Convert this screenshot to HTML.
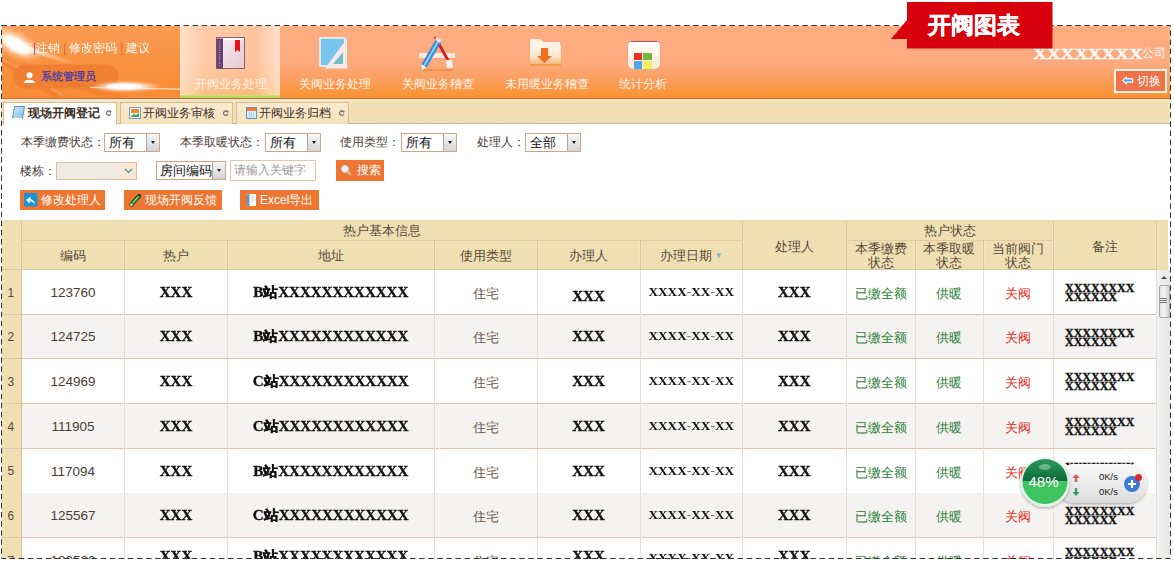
<!DOCTYPE html><html><head><meta charset="utf-8"><style>
*{box-sizing:border-box;margin:0;padding:0}
html,body{width:1174px;height:562px;overflow:hidden;background:#fff;font-family:"Liberation Sans",sans-serif;position:relative}
.a{position:absolute}
.hdr{left:2px;top:26px;width:1168px;height:72px;background:linear-gradient(#fcb48e 0,#fdac82 2px,#fdab7f 50%,#fca672 60%,#fb9e5e 75%,#fa9844 88%,#f99230 100%)}
.hdrline{left:2px;top:98px;width:1168px;height:1px;background:rgba(170,80,10,.8)}
.navact{left:180px;top:26px;width:100px;height:72px;background:linear-gradient(90deg,rgba(255,238,222,.8),rgba(255,222,190,.6) 25%,rgba(255,215,180,.55) 75%,rgba(255,238,222,.8))}
.green{left:180px;top:95px;width:100px;height:3px;background:linear-gradient(#cce86c,#acd44c)}
.navlbl{top:77px;height:14px;font-size:11.5px;line-height:14px;color:#fff3e6;white-space:nowrap}
.tabbar{left:2px;top:99px;width:1168px;height:25px;background:linear-gradient(#fde4c4 0,#fde4c4 2px,#eee2b8 3px,#f3dfb2 50%,#ede2ba 90%,#f3e0b8 100%);border-bottom:1px solid #cdb492}
.tab{top:102px;height:22px;border:1px solid #d9bb90;border-bottom:none;background:linear-gradient(#f9ead0,#f5e2bc);font-size:12.2px;line-height:20px;color:#3a3028;white-space:nowrap}
.tab.act{background:#fff;height:23px}
.lbl{font-size:12px;line-height:14px;color:#4a4038;white-space:nowrap}
.sel{height:19px;width:56px;border:1px solid #c9a888;background:#fff;font-size:12.5px;line-height:19px;padding-left:4px;color:#111}
.sel .arr{position:absolute;right:0;top:0;width:13.5px;height:17px;background:linear-gradient(#f6f6f6,#d4d4d4);border-left:1px solid #a8a8a8}
.sel .arr:after{content:"";position:absolute;left:4px;top:7px;border-left:2.5px solid transparent;border-right:2.5px solid transparent;border-top:3px solid #222}
.btn{height:20px;background:#ee7632;color:#fff;font-size:12px;line-height:20px;white-space:nowrap}
.th{color:#5a4a38;font-size:12.5px;text-align:center;white-space:nowrap}
.cell{text-align:center;white-space:nowrap}
.num{font-size:13.5px;color:#4a3c34;padding-top:1px}
.xs{font-family:"Liberation Serif",serif;font-weight:bold;font-size:15px;color:#111;-webkit-text-stroke:.35px #111}
.xs span{display:inline-block;transform:scaleY(.95)}
.dt{font-size:13.3px;-webkit-text-stroke:0}
.dt i{font-style:normal;color:#777;-webkit-text-stroke:0}
.cn{font-size:13px;color:#6a5448;padding-top:4px}
.g{color:#2c7e34;font-size:13px;padding-top:4px}
.r{color:#e62a14;font-size:13px;padding-top:4px}
.vl{width:1px;background:repeating-linear-gradient(#e4d4c4 0 1px,#efe8e2 1px 2px)}
.hl{height:1px;background:repeating-linear-gradient(90deg,#d4b898 0 1px,#e8d6c0 1px 2px)}
</style></head><body>
<div class="a hdr"></div>
<svg class="a" style="left:2px;top:26px" width="178" height="72" viewBox="0 0 178 72">
<defs>
<linearGradient id="lb" x1="0" y1="0" x2="0" y2="1"><stop offset="0" stop-color="#fa9c56"/><stop offset=".5" stop-color="#f99240"/><stop offset="1" stop-color="#f88c36"/></linearGradient>
<radialGradient id="glow1" cx="0.5" cy="0.5" r="0.5"><stop offset="0" stop-color="#fff" stop-opacity="1"/><stop offset=".45" stop-color="#fff" stop-opacity=".8"/><stop offset="1" stop-color="#fff" stop-opacity="0"/></radialGradient>
<linearGradient id="st1" x1="0" y1="0" x2="1" y2="0"><stop offset="0" stop-color="#fff" stop-opacity="1"/><stop offset=".5" stop-color="#fff" stop-opacity=".6"/><stop offset="1" stop-color="#fff" stop-opacity="0"/></linearGradient>
<filter id="bl" x="-50%" y="-50%" width="200%" height="200%"><feGaussianBlur stdDeviation="1.2"/></filter>
<filter id="bl2" x="-50%" y="-50%" width="200%" height="200%"><feGaussianBlur stdDeviation="2.5"/></filter>
</defs>
<rect width="178" height="72" fill="url(#lb)"/>
<path d="M0 30 C20 40 45 58 70 72 L52 72 C35 60 15 46 0 38Z" fill="#ec7424" opacity=".45" filter="url(#bl)"/>
<path d="M20 36 C50 48 90 62 130 72 L105 72 C75 64 45 52 18 42Z" fill="#ec7424" opacity=".35" filter="url(#bl)"/>
<path d="M0 33 C20 43 40 56 62 70" stroke="#fff" stroke-width="1.2" fill="none" opacity=".45" filter="url(#bl)"/>
<ellipse cx="14" cy="18" rx="28" ry="12" transform="rotate(30 14 18)" fill="url(#glow1)" filter="url(#bl2)"/>
<ellipse cx="14" cy="19" rx="15" ry="6" transform="rotate(30 14 19)" fill="#fff" opacity=".95" filter="url(#bl)"/>
<path d="M12 15 C30 22 52 30 75 37 L73 39 C52 33 30 26 10 20Z" fill="url(#st1)" filter="url(#bl)"/>
<rect x="11.5" y="38.5" width="105" height="24" rx="12" fill="#ee7a30" opacity=".8"/>
<ellipse cx="124" cy="60.5" rx="36" ry="5.5" fill="url(#glow1)" filter="url(#bl)"/>
<ellipse cx="122" cy="60.5" rx="18" ry="2.8" fill="#fff" filter="url(#bl)"/>
<path d="M88 61 L178 62.5 L178 63.7 L88 62Z" fill="#fff" opacity=".7"/>
</svg>
<div class="a" style="left:9px;top:41px;font-size:12px;line-height:14px;color:#fff;white-space:nowrap;opacity:.95;letter-spacing:0"><span style="opacity:.5">欢迎</span><span style="color:#8a50a0">|</span>注销<span style="color:#c86a3a;margin:0 3px">|</span>修改密码<span style="color:#c86a3a;margin:0 3px">|</span>建议</div>
<svg class="a" style="left:24px;top:72px" width="11" height="11" viewBox="0 0 11 11"><circle cx="5.5" cy="3.2" r="3" fill="#fff"/><path d="M0 11 C0 6.5 11 6.5 11 11Z" fill="#fff"/></svg>
<div class="a" style="left:41px;top:70px;font-size:11px;line-height:13px;color:#4a3aa8;white-space:nowrap;-webkit-text-stroke:.3px #4a3aa8">系统管理员</div>
<div class="a navact"></div><div class="a green"></div>
<div class="a hdrline"></div>
<svg class="a" style="left:216px;top:37px" width="29" height="32" viewBox="0 0 29 32">
<defs><linearGradient id="bk" x1="0" y1="0" x2="1" y2="1"><stop offset="0" stop-color="#f8eef2"/><stop offset="1" stop-color="#e6c8d2"/></linearGradient></defs>
<rect x="0.5" y="0.5" width="28" height="31" fill="url(#bk)" stroke="#8a6070" stroke-width="1"/>
<rect x="1" y="1" width="27" height="2.2" fill="#fff"/>
<rect x="0.5" y="1.5" width="6.5" height="30" fill="#6a4072"/>
<path d="M3.5 4 v26" stroke="#b8a0c8" stroke-width="1.2" stroke-dasharray="1 1.2"/>
<path d="M19 3 h5 v12 l-2.5 -2 l-2.5 2z" fill="#e8101c"/>
</svg>
<svg class="a" style="left:319px;top:37px" width="30" height="33" viewBox="0 0 30 33">
<rect x="1" y="1" width="25" height="28" fill="#78c6ee" stroke="#eaf8ff" stroke-width="1.5"/>
<path d="M28 1.5 L28 31.5 L6 31.5Z" fill="#f8eaea"/>
<path d="M24 15 L24 27 L14 27Z" fill="#70c0c8"/>
</svg>
<svg class="a" style="left:417px;top:34px" width="40" height="38" viewBox="0 0 40 38">
<rect x="2" y="19" width="36" height="5" fill="#fbeeee" opacity=".9"/>
<path d="M18 3 L32 28" stroke="#d81818" stroke-width="2.6"/>
<path d="M22 6 L7 32" stroke="#3a86d8" stroke-width="6"/>
<path d="M22 6 L7 32" stroke="#8ad0f8" stroke-width="2"/>
<path d="M19 3 L25 6 L23 9 L18 6Z" fill="#f8d8e0"/>
<path d="M4.5 30.5 L9.5 33.5 L5 36Z" fill="#fff"/>
<path d="M29 26 L35 26 L36 34 L30 34Z" fill="#fff" opacity=".9"/>
<path d="M6 36 L36 36" stroke="#f07020" stroke-width="1.5" opacity=".6"/>
</svg>
<svg class="a" style="left:529px;top:37px" width="33" height="30" viewBox="0 0 33 30">
<defs><linearGradient id="fd" x1="0" y1="0" x2="0" y2="1"><stop offset="0" stop-color="#fff6ec"/><stop offset=".6" stop-color="#fde4c8"/><stop offset="1" stop-color="#f8b070"/></linearGradient></defs>
<path d="M1 2 h10 l3 3 h17 v4 h-30z" fill="#fff2e4"/>
<rect x="1" y="8" width="31" height="20" fill="url(#fd)"/>
<path d="M1 28 h31" stroke="#f09040" stroke-width="1.5"/>
<path d="M12 11 h7 v8 h4 l-7.5 7 l-7.5 -7 h4z" fill="#f07020"/>
</svg>
<svg class="a" style="left:626px;top:39px" width="36" height="32" viewBox="0 0 36 32">
<defs><linearGradient id="wd" x1="0" y1="0" x2="0" y2="1"><stop offset="0" stop-color="#fff"/><stop offset="1" stop-color="#fde8d0"/></linearGradient></defs>
<rect x="1.5" y="1.5" width="33" height="29" rx="6" fill="url(#wd)" stroke="#e0a890"/>
<path d="M5 2.5 h26" stroke="#b06050" stroke-width="1"/>
<rect x="8" y="14" width="8" height="7" fill="#e83020"/>
<rect x="17" y="14" width="9" height="7" fill="#70b840"/>
<rect x="8" y="22" width="8" height="8" fill="#50a8e8"/>
<rect x="17" y="22" width="9" height="8" fill="#f0f060"/>
</svg>
<div class="a navlbl" style="left:195px">开阀业务处理</div>
<div class="a navlbl" style="left:299px">关阀业务处理</div>
<div class="a navlbl" style="left:402px">关阀业务稽查</div>
<div class="a navlbl" style="left:505px">未用暖业务稽查</div>
<div class="a navlbl" style="left:619px">统计分析</div>
<div class="a" style="left:1033px;top:44.5px;height:14px;white-space:nowrap"><span style="display:inline-block;font-family:'Liberation Serif',serif;font-weight:bold;font-size:14.5px;line-height:14px;color:rgba(255,255,255,.88);-webkit-text-stroke:.5px rgba(255,255,255,.88);transform:scaleX(1.31);transform-origin:0 0">XXXXXXXX</span></div>
<div class="a" style="left:1142px;top:46px;font-size:12px;line-height:14px;color:#fff;white-space:nowrap">公司</div>
<div class="a" style="left:1114px;top:69px;width:53px;height:24px;border:2px solid #fff3ea;background:#f07248;color:#fff;font-size:12px;line-height:20px;padding-left:21px">切换</div>
<svg class="a" style="left:1121px;top:75px" width="13" height="11" viewBox="0 0 13 11"><path d="M0.8 5.5 L6 0.8 V3.2 H12.2 V7.8 H6 V10.2Z" fill="#fff"/><path d="M2.5 5.5 L5.2 3 V4.4 H11 V6.6 H5.2 V8Z" fill="#48a8e8"/></svg>
<div class="a" style="left:2px;top:220px;width:1166px;height:49.5px;background:#efe0b4"></div>
<div class="a" style="left:2px;top:269px;width:19.5px;height:290px;background:#f0dfb2"></div>
<div class="a" style="left:21.5px;top:269.50px;width:1134.5px;height:44.67px;background:#fff"></div>
<div class="a" style="left:21.5px;top:314.17px;width:1134.5px;height:44.67px;background:#f4f3f1"></div>
<div class="a" style="left:21.5px;top:358.84px;width:1134.5px;height:44.67px;background:#fff"></div>
<div class="a" style="left:21.5px;top:403.51px;width:1134.5px;height:44.67px;background:#f4f3f1"></div>
<div class="a" style="left:21.5px;top:448.18px;width:1134.5px;height:44.67px;background:#fff"></div>
<div class="a" style="left:21.5px;top:492.85px;width:1134.5px;height:44.67px;background:#f4f3f1"></div>
<div class="a" style="left:21.5px;top:537.52px;width:1134.5px;height:44.67px;background:#fff"></div>
<div class="a" style="left:2px;top:268.5px;width:1154px;height:1px;background:#d8c8a4"></div>
<div class="a hl" style="left:2px;top:313.67px;width:1154px"></div>
<div class="a hl" style="left:2px;top:358.34px;width:1154px"></div>
<div class="a hl" style="left:2px;top:403.01px;width:1154px"></div>
<div class="a hl" style="left:2px;top:447.68px;width:1154px"></div>
<div class="a hl" style="left:2px;top:537.02px;width:1154px"></div>
<div class="a hl" style="left:2px;top:581.69px;width:1154px"></div>
<div class="a vl" style="left:21.0px;top:270px;height:290px"></div>
<div class="a vl" style="left:124.0px;top:270px;height:290px"></div>
<div class="a vl" style="left:227.0px;top:270px;height:290px"></div>
<div class="a vl" style="left:433.5px;top:270px;height:290px"></div>
<div class="a vl" style="left:536.5px;top:270px;height:290px"></div>
<div class="a vl" style="left:639.5px;top:270px;height:290px"></div>
<div class="a vl" style="left:742.0px;top:270px;height:290px"></div>
<div class="a vl" style="left:845.5px;top:270px;height:290px"></div>
<div class="a vl" style="left:914.5px;top:270px;height:290px"></div>
<div class="a vl" style="left:982.5px;top:270px;height:290px"></div>
<div class="a vl" style="left:1052.5px;top:270px;height:290px"></div>
<div class="a vl" style="left:1155.5px;top:270px;height:290px"></div>
<div class="a" style="left:741.0px;top:220px;width:3px;height:48.5px;background:#f6e2c0"></div><div class="a" style="left:742.0px;top:220px;width:1px;height:48.5px;background:#dcc49c"></div>
<div class="a" style="left:844.5px;top:220px;width:3px;height:48.5px;background:#f6e2c0"></div><div class="a" style="left:845.5px;top:220px;width:1px;height:48.5px;background:#dcc49c"></div>
<div class="a" style="left:1051.5px;top:220px;width:3px;height:48.5px;background:#f6e2c0"></div><div class="a" style="left:1052.5px;top:220px;width:1px;height:48.5px;background:#dcc49c"></div>
<div class="a" style="left:1154.5px;top:220px;width:3px;height:48.5px;background:#f6e2c0"></div><div class="a" style="left:1155.5px;top:220px;width:1px;height:48.5px;background:#dcc49c"></div>
<div class="a" style="left:123.0px;top:240px;width:3px;height:28.5px;background:#f6e2c0"></div><div class="a" style="left:124.0px;top:240px;width:1px;height:28.5px;background:#dcc49c"></div>
<div class="a" style="left:226.0px;top:240px;width:3px;height:28.5px;background:#f6e2c0"></div><div class="a" style="left:227.0px;top:240px;width:1px;height:28.5px;background:#dcc49c"></div>
<div class="a" style="left:432.5px;top:240px;width:3px;height:28.5px;background:#f6e2c0"></div><div class="a" style="left:433.5px;top:240px;width:1px;height:28.5px;background:#dcc49c"></div>
<div class="a" style="left:535.5px;top:240px;width:3px;height:28.5px;background:#f6e2c0"></div><div class="a" style="left:536.5px;top:240px;width:1px;height:28.5px;background:#dcc49c"></div>
<div class="a" style="left:638.5px;top:240px;width:3px;height:28.5px;background:#f6e2c0"></div><div class="a" style="left:639.5px;top:240px;width:1px;height:28.5px;background:#dcc49c"></div>
<div class="a" style="left:913.5px;top:240px;width:3px;height:28.5px;background:#f6e2c0"></div><div class="a" style="left:914.5px;top:240px;width:1px;height:28.5px;background:#dcc49c"></div>
<div class="a" style="left:981.5px;top:240px;width:3px;height:28.5px;background:#f6e2c0"></div><div class="a" style="left:982.5px;top:240px;width:1px;height:28.5px;background:#dcc49c"></div>
<div class="a" style="left:21px;top:220px;width:1px;height:340px;background:#dcc48e"></div>
<div class="a" style="left:21.5px;top:239.5px;width:721px;height:1px;background:#e2cca0"></div>
<div class="a" style="left:846px;top:239.5px;width:207px;height:1px;background:#e2cca0"></div>
<div class="a" style="left:2px;top:219.5px;width:1166px;height:1px;background:#ead8b0"></div>
<div class="a th" style="left:21.5px;top:220px;width:721.0px;height:20px;display:flex;align-items:center;justify-content:center;line-height:14.5px;padding-top:3px">热户基本信息</div>
<div class="a th" style="left:846px;top:220px;width:207px;height:20px;display:flex;align-items:center;justify-content:center;line-height:14.5px;padding-top:3px">热户状态</div>
<div class="a th" style="left:21.5px;top:240px;width:103.0px;height:29.5px;display:flex;align-items:center;justify-content:center;line-height:14.5px;padding-top:2px">编码</div>
<div class="a th" style="left:124.5px;top:240px;width:103.0px;height:29.5px;display:flex;align-items:center;justify-content:center;line-height:14.5px;padding-top:2px">热户</div>
<div class="a th" style="left:227.5px;top:240px;width:206.5px;height:29.5px;display:flex;align-items:center;justify-content:center;line-height:14.5px;padding-top:2px">地址</div>
<div class="a th" style="left:434px;top:240px;width:103px;height:29.5px;display:flex;align-items:center;justify-content:center;line-height:14.5px;padding-top:2px">使用类型</div>
<div class="a th" style="left:537px;top:240px;width:103px;height:29.5px;display:flex;align-items:center;justify-content:center;line-height:14.5px;padding-top:2px">办理人</div>
<div class="a th" style="left:640px;top:240px;width:102.5px;height:29.5px;display:flex;align-items:center;justify-content:center;line-height:14.5px;padding-top:2px">办理日期<span style="color:#7ab0d8;font-size:8px;margin-left:3px">▼</span></div>
<div class="a th" style="left:742.5px;top:220px;width:103.5px;height:49.5px;display:flex;align-items:center;justify-content:center;line-height:14.5px;padding-top:4px">处理人</div>
<div class="a th" style="left:846px;top:240px;width:69px;height:29.5px;display:flex;align-items:center;justify-content:center;line-height:14.5px;padding-top:3px">本季缴费<br>状态</div>
<div class="a th" style="left:915px;top:240px;width:68px;height:29.5px;display:flex;align-items:center;justify-content:center;line-height:14.5px;padding-top:3px">本季取暖<br>状态</div>
<div class="a th" style="left:983px;top:240px;width:70px;height:29.5px;display:flex;align-items:center;justify-content:center;line-height:14.5px;padding-top:3px">当前阀门<br>状态</div>
<div class="a th" style="left:1053px;top:220px;width:103px;height:49.5px;display:flex;align-items:center;justify-content:center;line-height:14.5px;padding-top:4px">备注</div>
<div class="a" style="left:7.5px;top:285.50px;font-size:12px;line-height:14px;color:#5a4a38">1</div>
<div class="a cell num" style="left:21.5px;top:269.50px;width:103.0px;height:44.67px;display:flex;align-items:center;justify-content:center;">123760</div>
<div class="a cell xs" style="left:124.5px;top:269.50px;width:103.0px;height:44.67px;display:flex;align-items:center;justify-content:center;padding-top:1px"><span>XXX</span></div>
<div class="a cell xs" style="left:227.5px;top:269.50px;width:206.5px;height:44.67px;display:flex;align-items:center;justify-content:center;padding-top:1px"><span>B站XXXXXXXXXXXX</span></div>
<div class="a cell cn" style="left:434px;top:269.50px;width:103px;height:44.67px;display:flex;align-items:center;justify-content:center;">住宅</div>
<div class="a cell xs" style="left:537px;top:269.50px;width:103px;height:44.67px;display:flex;align-items:center;justify-content:center;padding-top:9px"><span>XXX</span></div>
<div class="a cell xs dt" style="left:640px;top:269.50px;width:102.5px;height:44.67px;display:flex;align-items:center;justify-content:center;padding-top:0px"><span>XXXX<i>-</i>XX<i>-</i>XX</span></div>
<div class="a cell xs" style="left:742.5px;top:269.50px;width:103.5px;height:44.67px;display:flex;align-items:center;justify-content:center;padding-top:1px"><span>XXX</span></div>
<div class="a cell g" style="left:846px;top:269.50px;width:69px;height:44.67px;display:flex;align-items:center;justify-content:center;">已缴全额</div>
<div class="a cell g" style="left:915px;top:269.50px;width:68px;height:44.67px;display:flex;align-items:center;justify-content:center;">供暖</div>
<div class="a cell r" style="left:983px;top:269.50px;width:70px;height:44.67px;display:flex;align-items:center;justify-content:center;">关阀</div>
<div class="a xs" style="left:1065px;top:284.00px;line-height:9px;font-size:12px;white-space:nowrap">XXXXXXXX<br>XXXXXX</div>
<div class="a" style="left:7.5px;top:330.17px;font-size:12px;line-height:14px;color:#5a4a38">2</div>
<div class="a cell num" style="left:21.5px;top:314.17px;width:103.0px;height:44.67px;display:flex;align-items:center;justify-content:center;">124725</div>
<div class="a cell xs" style="left:124.5px;top:314.17px;width:103.0px;height:44.67px;display:flex;align-items:center;justify-content:center;padding-top:1px"><span>XXX</span></div>
<div class="a cell xs" style="left:227.5px;top:314.17px;width:206.5px;height:44.67px;display:flex;align-items:center;justify-content:center;padding-top:1px"><span>B站XXXXXXXXXXXX</span></div>
<div class="a cell cn" style="left:434px;top:314.17px;width:103px;height:44.67px;display:flex;align-items:center;justify-content:center;">住宅</div>
<div class="a cell xs" style="left:537px;top:314.17px;width:103px;height:44.67px;display:flex;align-items:center;justify-content:center;padding-top:1px"><span>XXX</span></div>
<div class="a cell xs dt" style="left:640px;top:314.17px;width:102.5px;height:44.67px;display:flex;align-items:center;justify-content:center;padding-top:0px"><span>XXXX<i>-</i>XX<i>-</i>XX</span></div>
<div class="a cell xs" style="left:742.5px;top:314.17px;width:103.5px;height:44.67px;display:flex;align-items:center;justify-content:center;padding-top:1px"><span>XXX</span></div>
<div class="a cell g" style="left:846px;top:314.17px;width:69px;height:44.67px;display:flex;align-items:center;justify-content:center;">已缴全额</div>
<div class="a cell g" style="left:915px;top:314.17px;width:68px;height:44.67px;display:flex;align-items:center;justify-content:center;">供暖</div>
<div class="a cell r" style="left:983px;top:314.17px;width:70px;height:44.67px;display:flex;align-items:center;justify-content:center;">关阀</div>
<div class="a xs" style="left:1065px;top:328.67px;line-height:9px;font-size:12px;white-space:nowrap">XXXXXXXX<br>XXXXXX</div>
<div class="a" style="left:7.5px;top:374.84px;font-size:12px;line-height:14px;color:#5a4a38">3</div>
<div class="a cell num" style="left:21.5px;top:358.84px;width:103.0px;height:44.67px;display:flex;align-items:center;justify-content:center;">124969</div>
<div class="a cell xs" style="left:124.5px;top:358.84px;width:103.0px;height:44.67px;display:flex;align-items:center;justify-content:center;padding-top:1px"><span>XXX</span></div>
<div class="a cell xs" style="left:227.5px;top:358.84px;width:206.5px;height:44.67px;display:flex;align-items:center;justify-content:center;padding-top:1px"><span>C站XXXXXXXXXXXX</span></div>
<div class="a cell cn" style="left:434px;top:358.84px;width:103px;height:44.67px;display:flex;align-items:center;justify-content:center;">住宅</div>
<div class="a cell xs" style="left:537px;top:358.84px;width:103px;height:44.67px;display:flex;align-items:center;justify-content:center;padding-top:1px"><span>XXX</span></div>
<div class="a cell xs dt" style="left:640px;top:358.84px;width:102.5px;height:44.67px;display:flex;align-items:center;justify-content:center;padding-top:0px"><span>XXXX<i>-</i>XX<i>-</i>XX</span></div>
<div class="a cell xs" style="left:742.5px;top:358.84px;width:103.5px;height:44.67px;display:flex;align-items:center;justify-content:center;padding-top:1px"><span>XXX</span></div>
<div class="a cell g" style="left:846px;top:358.84px;width:69px;height:44.67px;display:flex;align-items:center;justify-content:center;">已缴全额</div>
<div class="a cell g" style="left:915px;top:358.84px;width:68px;height:44.67px;display:flex;align-items:center;justify-content:center;">供暖</div>
<div class="a cell r" style="left:983px;top:358.84px;width:70px;height:44.67px;display:flex;align-items:center;justify-content:center;">关阀</div>
<div class="a xs" style="left:1065px;top:373.34px;line-height:9px;font-size:12px;white-space:nowrap">XXXXXXXX<br>XXXXXX</div>
<div class="a" style="left:7.5px;top:419.51px;font-size:12px;line-height:14px;color:#5a4a38">4</div>
<div class="a cell num" style="left:21.5px;top:403.51px;width:103.0px;height:44.67px;display:flex;align-items:center;justify-content:center;">111905</div>
<div class="a cell xs" style="left:124.5px;top:403.51px;width:103.0px;height:44.67px;display:flex;align-items:center;justify-content:center;padding-top:1px"><span>XXX</span></div>
<div class="a cell xs" style="left:227.5px;top:403.51px;width:206.5px;height:44.67px;display:flex;align-items:center;justify-content:center;padding-top:1px"><span>C站XXXXXXXXXXXX</span></div>
<div class="a cell cn" style="left:434px;top:403.51px;width:103px;height:44.67px;display:flex;align-items:center;justify-content:center;">住宅</div>
<div class="a cell xs" style="left:537px;top:403.51px;width:103px;height:44.67px;display:flex;align-items:center;justify-content:center;padding-top:1px"><span>XXX</span></div>
<div class="a cell xs dt" style="left:640px;top:403.51px;width:102.5px;height:44.67px;display:flex;align-items:center;justify-content:center;padding-top:0px"><span>XXXX<i>-</i>XX<i>-</i>XX</span></div>
<div class="a cell xs" style="left:742.5px;top:403.51px;width:103.5px;height:44.67px;display:flex;align-items:center;justify-content:center;padding-top:1px"><span>XXX</span></div>
<div class="a cell g" style="left:846px;top:403.51px;width:69px;height:44.67px;display:flex;align-items:center;justify-content:center;">已缴全额</div>
<div class="a cell g" style="left:915px;top:403.51px;width:68px;height:44.67px;display:flex;align-items:center;justify-content:center;">供暖</div>
<div class="a cell r" style="left:983px;top:403.51px;width:70px;height:44.67px;display:flex;align-items:center;justify-content:center;">关阀</div>
<div class="a xs" style="left:1065px;top:418.01px;line-height:9px;font-size:12px;white-space:nowrap">XXXXXXXX<br>XXXXXX</div>
<div class="a" style="left:7.5px;top:464.18px;font-size:12px;line-height:14px;color:#5a4a38">5</div>
<div class="a cell num" style="left:21.5px;top:448.18px;width:103.0px;height:44.67px;display:flex;align-items:center;justify-content:center;">117094</div>
<div class="a cell xs" style="left:124.5px;top:448.18px;width:103.0px;height:44.67px;display:flex;align-items:center;justify-content:center;padding-top:1px"><span>XXX</span></div>
<div class="a cell xs" style="left:227.5px;top:448.18px;width:206.5px;height:44.67px;display:flex;align-items:center;justify-content:center;padding-top:1px"><span>B站XXXXXXXXXXXX</span></div>
<div class="a cell cn" style="left:434px;top:448.18px;width:103px;height:44.67px;display:flex;align-items:center;justify-content:center;">住宅</div>
<div class="a cell xs" style="left:537px;top:448.18px;width:103px;height:44.67px;display:flex;align-items:center;justify-content:center;padding-top:1px"><span>XXX</span></div>
<div class="a cell xs dt" style="left:640px;top:448.18px;width:102.5px;height:44.67px;display:flex;align-items:center;justify-content:center;padding-top:0px"><span>XXXX<i>-</i>XX<i>-</i>XX</span></div>
<div class="a cell xs" style="left:742.5px;top:448.18px;width:103.5px;height:44.67px;display:flex;align-items:center;justify-content:center;padding-top:1px"><span>XXX</span></div>
<div class="a cell g" style="left:846px;top:448.18px;width:69px;height:44.67px;display:flex;align-items:center;justify-content:center;">已缴全额</div>
<div class="a cell g" style="left:915px;top:448.18px;width:68px;height:44.67px;display:flex;align-items:center;justify-content:center;">供暖</div>
<div class="a cell r" style="left:983px;top:448.18px;width:70px;height:44.67px;display:flex;align-items:center;justify-content:center;">关阀</div>
<div class="a xs" style="left:1065px;top:462.68px;line-height:9px;font-size:12px;white-space:nowrap">XXXXXXXX<br>XXXXXX</div>
<div class="a" style="left:7.5px;top:508.85px;font-size:12px;line-height:14px;color:#5a4a38">6</div>
<div class="a cell num" style="left:21.5px;top:492.85px;width:103.0px;height:44.67px;display:flex;align-items:center;justify-content:center;">125567</div>
<div class="a cell xs" style="left:124.5px;top:492.85px;width:103.0px;height:44.67px;display:flex;align-items:center;justify-content:center;padding-top:1px"><span>XXX</span></div>
<div class="a cell xs" style="left:227.5px;top:492.85px;width:206.5px;height:44.67px;display:flex;align-items:center;justify-content:center;padding-top:1px"><span>C站XXXXXXXXXXXX</span></div>
<div class="a cell cn" style="left:434px;top:492.85px;width:103px;height:44.67px;display:flex;align-items:center;justify-content:center;">住宅</div>
<div class="a cell xs" style="left:537px;top:492.85px;width:103px;height:44.67px;display:flex;align-items:center;justify-content:center;padding-top:1px"><span>XXX</span></div>
<div class="a cell xs dt" style="left:640px;top:492.85px;width:102.5px;height:44.67px;display:flex;align-items:center;justify-content:center;padding-top:0px"><span>XXXX<i>-</i>XX<i>-</i>XX</span></div>
<div class="a cell xs" style="left:742.5px;top:492.85px;width:103.5px;height:44.67px;display:flex;align-items:center;justify-content:center;padding-top:1px"><span>XXX</span></div>
<div class="a cell g" style="left:846px;top:492.85px;width:69px;height:44.67px;display:flex;align-items:center;justify-content:center;">已缴全额</div>
<div class="a cell g" style="left:915px;top:492.85px;width:68px;height:44.67px;display:flex;align-items:center;justify-content:center;">供暖</div>
<div class="a cell r" style="left:983px;top:492.85px;width:70px;height:44.67px;display:flex;align-items:center;justify-content:center;">关阀</div>
<div class="a xs" style="left:1065px;top:507.35px;line-height:9px;font-size:12px;white-space:nowrap">XXXXXXXX<br>XXXXXX</div>
<div class="a" style="left:7.5px;top:553.52px;font-size:12px;line-height:14px;color:#5a4a38">7</div>
<div class="a cell num" style="left:21.5px;top:537.52px;width:103.0px;height:44.67px;display:flex;align-items:center;justify-content:center;">120520</div>
<div class="a cell xs" style="left:124.5px;top:533.52px;width:103.0px;height:44.67px;display:flex;align-items:center;justify-content:center;padding-top:1px"><span>XXX</span></div>
<div class="a cell xs" style="left:227.5px;top:533.52px;width:206.5px;height:44.67px;display:flex;align-items:center;justify-content:center;padding-top:1px"><span>B站XXXXXXXXXXXX</span></div>
<div class="a cell cn" style="left:434px;top:537.52px;width:103px;height:44.67px;display:flex;align-items:center;justify-content:center;">住宅</div>
<div class="a cell xs" style="left:537px;top:533.52px;width:103px;height:44.67px;display:flex;align-items:center;justify-content:center;padding-top:1px"><span>XXX</span></div>
<div class="a cell xs dt" style="left:640px;top:535.52px;width:102.5px;height:44.67px;display:flex;align-items:center;justify-content:center;padding-top:0px"><span>XXXX<i>-</i>XX<i>-</i>XX</span></div>
<div class="a cell xs" style="left:742.5px;top:533.52px;width:103.5px;height:44.67px;display:flex;align-items:center;justify-content:center;padding-top:1px"><span>XXX</span></div>
<div class="a cell g" style="left:846px;top:537.52px;width:69px;height:44.67px;display:flex;align-items:center;justify-content:center;">已缴全额</div>
<div class="a cell g" style="left:915px;top:537.52px;width:68px;height:44.67px;display:flex;align-items:center;justify-content:center;">供暖</div>
<div class="a cell r" style="left:983px;top:537.52px;width:70px;height:44.67px;display:flex;align-items:center;justify-content:center;">关阀</div>
<div class="a xs" style="left:1065px;top:548.02px;line-height:9px;font-size:12px;white-space:nowrap">XXXXXXXX<br>XXXXXX</div>
<div class="a" style="left:1157px;top:270px;width:13px;height:290px;background:linear-gradient(90deg,#f2f2f2,#e6e6e6)"></div>
<svg class="a" style="left:1159px;top:274px" width="10" height="6" viewBox="0 0 10 6"><path d="M2 5 L5 2 L8 5Z" fill="#444"/></svg>
<div class="a" style="left:1158.5px;top:285px;width:11px;height:33px;border:1px solid #a8a8a8;border-radius:2px;background:linear-gradient(90deg,#e0e0e0,#f6f6f6 40%,#d4d4d4)"></div>
<div class="a" style="left:1160px;top:298px;width:7px;height:5px;border-top:1px solid #777;border-bottom:1px solid #777"></div><div class="a" style="left:1160px;top:300px;width:7px;height:1px;background:#777"></div>
<svg class="a" style="left:1015px;top:452px" width="140" height="62" viewBox="0 0 140 62">
<defs>
<linearGradient id="pill" x1="0" y1="0" x2="0" y2="1"><stop offset="0" stop-color="#fafafa"/><stop offset="1" stop-color="#dcdcdc"/></linearGradient>
<linearGradient id="top" x1="0" y1="0" x2="0" y2="1"><stop offset="0" stop-color="#2a9a5a"/><stop offset="1" stop-color="#0a6a38"/></linearGradient>
<filter id="sh" x="-20%" y="-20%" width="140%" height="140%"><feDropShadow dx="0" dy="1" stdDeviation="1.5" flood-opacity=".35"/></filter>
</defs>
<rect x="40" y="12" width="92" height="39" rx="19.5" fill="url(#pill)" filter="url(#sh)"/>
<circle cx="30" cy="30.5" r="24.5" fill="#e0f4e8" filter="url(#sh)"/>
<path d="M7.5 29.5 A22.5 22.5 0 0 1 52.5 29.5Z" fill="url(#top)"/>
<path d="M7.5 29.5 A22.5 22.5 0 0 0 52.5 29.5Z" fill="#3ec45e"/>
<ellipse cx="30" cy="15" rx="6" ry="3" fill="#fff" opacity=".35"/>
<circle cx="117" cy="32" r="8" fill="#3a7ad8"/>
<path d="M113 32 h8 M117 28 v8" stroke="#fff" stroke-width="2.2"/>
<circle cx="123.5" cy="25.5" r="3.5" fill="#e02828"/>
<path d="M61 22 l-3.5 4 h2.3 v4 h2.4 v-4 h2.3z" fill="#e05858"/>
<path d="M61 44 l-3.5 -4 h2.3 v-4 h2.4 v4 h2.3z" fill="#30a060"/>
</svg>
<div class="a" style="left:1028.5px;top:473px;font-size:15px;line-height:17px;color:#fff;letter-spacing:0px">48%</div>
<div class="a" style="left:1099px;top:470px;font-size:9.5px;line-height:14.5px;color:#222">0K/s<br>0K/s</div>
<div class="a" style="left:0;top:558.5px;width:1174px;height:4px;background:#fff"></div><div class="a" style="left:1170.5px;top:0;width:4px;height:562px;background:#fff"></div>
<svg class="a" style="left:0;top:0" width="1174" height="562" viewBox="0 0 1174 562">
<rect x="1.5" y="25.5" width="1169" height="533" fill="none" stroke="#333" stroke-width="1" stroke-dasharray="5.5 3.6"/>
</svg>
<svg class="a" style="left:890px;top:2px" width="164" height="47" viewBox="0 0 164 47">
<path d="M17 0 H162.5 V46.5 H17 V37 H1 L17 18Z" fill="#d9000e"/>
</svg>
<div class="a" style="left:928px;top:13px;font-size:22.5px;line-height:26px;font-weight:bold;color:#fff;white-space:nowrap;-webkit-text-stroke:.5px #fff">开阀图表</div>
<div class="a tabbar"></div>
<div class="a tab act" style="left:3px;width:114px;padding-left:24px;font-weight:bold">现场开阀登记</div>
<div class="a tab" style="left:120px;width:113px;padding-left:22px">开阀业务审核</div>
<div class="a tab" style="left:236px;width:113px;padding-left:22px">开阀业务归档</div>
<svg class="a" style="left:106.0px;top:109.5px" width="6" height="6" viewBox="0 0 7 7"><path d="M5.5 2.2 A2.6 2.6 0 1 0 5.8 4.5" stroke="#666" stroke-width="1.3" fill="none"/><path d="M4 0.8 L6.6 1.6 L5.6 3.8Z" fill="#666"/></svg>
<svg class="a" style="left:222.5px;top:109.5px" width="6" height="6" viewBox="0 0 7 7"><path d="M5.5 2.2 A2.6 2.6 0 1 0 5.8 4.5" stroke="#666" stroke-width="1.3" fill="none"/><path d="M4 0.8 L6.6 1.6 L5.6 3.8Z" fill="#666"/></svg>
<svg class="a" style="left:338.5px;top:109.5px" width="6" height="6" viewBox="0 0 7 7"><path d="M5.5 2.2 A2.6 2.6 0 1 0 5.8 4.5" stroke="#666" stroke-width="1.3" fill="none"/><path d="M4 0.8 L6.6 1.6 L5.6 3.8Z" fill="#666"/></svg>
<svg class="a" style="left:11px;top:105px" width="15" height="15" viewBox="0 0 15 15"><defs><linearGradient id="pg" x1="0" y1="0" x2="1" y2="1"><stop offset="0" stop-color="#c8ecfa"/><stop offset="1" stop-color="#80c0e0"/></linearGradient></defs><path d="M3.5 1.5 H13.5 L11.5 13.5 H1.5Z" fill="url(#pg)" stroke="#6a90b0"/><path d="M1.5 13.5 H11" stroke="#fff" stroke-width="1"/></svg>
<svg class="a" style="left:129px;top:107px" width="12" height="12" viewBox="0 0 12 12"><rect x=".5" y=".5" width="11" height="11" fill="#f0f8fa" stroke="#8098b0"/><rect x="2" y="2" width="8" height="4" fill="#f08838"/><path d="M2 9 L5 7 L7 8 L10 6 V10 H2Z" fill="#40a878"/></svg>
<svg class="a" style="left:246px;top:107px" width="11" height="12" viewBox="0 0 11 12"><rect x=".5" y=".5" width="10" height="11" fill="#d8ecfa" stroke="#7090b0"/><rect x="1" y="1" width="9" height="3" fill="#f07838"/><path d="M3.5 5 v6 M5.5 5 v6 M7.5 5 v6" stroke="#a8c8e8" stroke-width=".8"/></svg>
<div class="a lbl" style="left:21px;top:135px">本季缴费状态：</div>
<div class="a sel" style="left:104px;top:133px">所有<div class="arr"></div></div>
<div class="a lbl" style="left:180px;top:135px">本季取暖状态：</div>
<div class="a sel" style="left:265px;top:133px">所有<div class="arr"></div></div>
<div class="a lbl" style="left:340px;top:135px">使用类型：</div>
<div class="a sel" style="left:401px;top:133px">所有<div class="arr"></div></div>
<div class="a lbl" style="left:477px;top:135px">处理人：</div>
<div class="a sel" style="left:525px;top:133px">全部<div class="arr"></div></div>
<div class="a lbl" style="left:20px;top:164px">楼栋：</div>
<div class="a" style="left:56px;top:162px;width:81px;height:18px;border:1px solid #d9c0a0;background:#eeebe6"><div style="position:absolute;right:0;top:0;width:15px;height:16px;background:#fbe8d4"></div><svg style="position:absolute;right:3px;top:5px" width="9" height="6" viewBox="0 0 9 6"><path d="M1 1 L4.5 4.5 L8 1" stroke="#40a0b0" stroke-width="1.5" fill="none"/></svg></div>
<div class="a sel" style="left:156px;top:161px;width:70px;height:19px;padding-left:2.5px">房间编码<div class="arr"></div></div>
<div class="a" style="left:230px;top:160px;width:86px;height:21px;border:1px solid #e0c8b0;background:#fff;font-size:12px;line-height:19px;padding-left:3px;color:#999">请输入关键字</div>
<div class="a btn" style="left:336px;top:160px;width:48px;height:21px;padding-left:21px;line-height:21px">搜索</div>
<svg class="a" style="left:340px;top:164px" width="12" height="12" viewBox="0 0 12 12"><circle cx="5" cy="5" r="3.5" fill="#e8f4fc" stroke="#c0d8e8"/><path d="M7.5 7.5 L11 11" stroke="#f0c080" stroke-width="2"/></svg>
<div class="a btn" style="left:20px;top:190px;width:85px;padding-left:21px;line-height:21px">修改处理人</div>
<svg class="a" style="left:23.5px;top:193px" width="14" height="14" viewBox="0 0 14 14"><rect width="13.5" height="13.5" fill="#1a94d0"/><path d="M2 7 L7 3.5 L6.5 6 C9 6.5 10.5 8.5 11 11.5 C9.5 9.5 8 8.5 6 8.3 L5.5 10.5Z" fill="#e8fcff"/></svg>
<div class="a btn" style="left:124px;top:190px;width:98px;padding-left:21px;line-height:21px">现场开阀反馈</div>
<svg class="a" style="left:129px;top:193px" width="13" height="14" viewBox="0 0 13 14"><path d="M2.5 11.5 L10 3" stroke="#1a4a1a" stroke-width="4.2" stroke-linecap="round"/><path d="M2.5 11.5 L10 3" stroke="#3aa83a" stroke-width="2.6"/><path d="M4 9.5 L9 4" stroke="#a0e890" stroke-width="1"/><circle cx="2.3" cy="11.8" r="1.2" fill="#f0f0a0"/></svg>
<div class="a btn" style="left:240px;top:190px;width:79px;padding-left:20px;font-size:12px;line-height:21px">Excel导出</div>
<svg class="a" style="left:245px;top:193px" width="12" height="14" viewBox="0 0 12 14"><path d="M1 2 C2 1 3.5 1 4.5 1 L11 1 L11 13 L4.5 13 C3.5 13 2 13 1 12Z" fill="#f4f8fc"/><path d="M1 2 C2 1 3.5 1 4.5 1 L4.5 13 C3.5 13 2 13 1 12Z" fill="#8090a8"/><path d="M6 4 h4 M6 7 h4" stroke="#b8c8d8" stroke-width=".8"/></svg>
</body></html>
